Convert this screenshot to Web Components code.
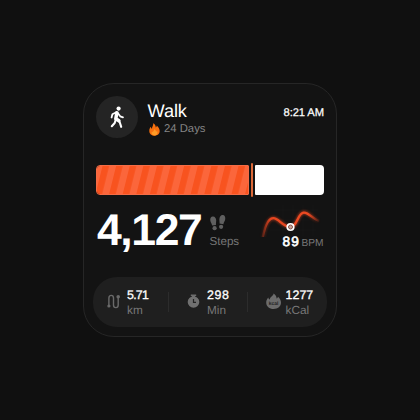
<!DOCTYPE html>
<html lang="en"><head><meta charset="utf-8"><title>Walk</title>
<style>
html,body{margin:0;width:420px;height:420px;background:#101010;overflow:hidden}
body{display:grid;place-items:center;font-family:"Liberation Sans",Arial,sans-serif;text-rendering:geometricPrecision}
</style></head><body>
<walk-card></walk-card>
<script>
const define=(name,html)=>{
  const t=document.createElement('template');t.innerHTML=html;
  customElements.define(name,class extends HTMLElement{
    constructor(){super();this.attachShadow({mode:'open'}).append(t.content.cloneNode(true))}
  });
};
define('card-header',`<style>
:host{display:flex;height:42px;color:#fff}
.disc{width:42px;height:42px;border-radius:50%;background:#242424;flex:none}
.info{margin-left:9.5px;flex:1}
.title{font-size:18.2px;line-height:20px;margin-top:5px;letter-spacing:-.1px}
.streak{display:flex;align-items:center;gap:4px;font-size:11.3px;line-height:14px;color:#858585;margin-top:1px}
.streak svg{margin-left:1.5px}
.time{font-size:11.2px;line-height:14px;margin-top:10px;letter-spacing:-.08px;-webkit-text-stroke:.25px #fff}
</style>
<div class="disc"><svg width="42" height="42" viewBox="0 0 42 42" fill="none" stroke="#fff" stroke-linecap="round" stroke-linejoin="round"><circle cx="22.6" cy="12.6" r="2.1" fill="#fff" stroke="none"/><path d="M20.9 16.8 19.8 22.8 22.9 24.8" stroke-width="3.5"/><path d="M20.3 16.3 16.4 18.2 15.6 21.5M22 17.3 24.2 20.3 27 21.3" stroke-width="1.8"/><path d="M19.8 23.5 18.7 27 15.8 30.2M22.2 23.8 23.8 26.5 25.2 30.8" stroke-width="2.1"/></svg></div>
<div class="info"><div class="title">Walk</div><div class="streak"><svg width="11" height="13" viewBox="0 0 11 13"><path d="M4.1.2C6 1.1 6.8 2.7 6.8 4.4 7.5 4.1 7.8 3.4 7.7 2.6 9.4 4 10.7 6 10.7 8 10.7 10.8 8.4 12.7 5.6 12.7 2.7 12.7.3 10.6.3 7.9.3 6 1 4.7 1.8 3.8 2 5 2.4 5.5 3 5.7 2.9 3.6 4.7 2.5 4.1.2Z" fill="#f8700f"/><path d="M5.4 6C6.8 7.1 7 8 7 8.8L8 7.9C9.3 10 8 12.4 5.6 12.4 3.3 12.4 2 10.6 3 8.5L4 9.2C3.9 8.1 5.4 7.5 5.4 6Z" fill="#ff9c26"/></svg><span>24 Days</span></div></div>
<div class="time">8:21 AM</div>`);
define('step-progress',`<style>
:host{display:flex;align-items:center;height:34px}
.done{width:153px;height:30px;border-radius:4px 1px 1px 4px;box-sizing:border-box;border:.8px solid #f56c45;overflow:hidden}
.done svg{display:block}
.mark{width:2.4px;height:34px;margin:0 1.9px 0 1.7px;border-radius:1px;background:#dc6837}
.left{flex:1;height:30px;border-radius:1px 4px 4px 1px;background:#fff}
</style><div class="done"><svg width="153" height="30"><defs><pattern id="s" width="13.6" height="30" patternUnits="userSpaceOnUse" patternTransform="translate(5.5 0) skewX(-14)"><path fill="#f8531f" d="M0 0h13.6v30H0z"/><path fill="#fb663b" d="M6.6 0h7v30h-7z"/></pattern></defs><rect width="153" height="30" fill="url(#s)"/></svg></div><div class="mark"></div><div class="left"></div>`);
define('step-summary',`<style>
:host{display:flex;height:50px;color:#fff}
.count{font-size:44.5px;line-height:50px;font-weight:700;letter-spacing:-1.4px;width:112.5px;margin-left:1px;padding-top:3px;box-sizing:border-box;white-space:nowrap}
.steps{width:47px;padding-top:12px;font-size:11.6px;color:#777}
.steps svg{display:block}.steps span{display:block;line-height:14px;margin-top:4px}
.heart{flex:1;display:flex;flex-direction:column;align-items:flex-end}
.heart svg{display:block}
.rate{display:flex;align-items:baseline;gap:1.5px;line-height:16px;margin-top:-3px}
b{font-weight:400;font-size:13.6px;letter-spacing:1.2px;-webkit-text-stroke:.65px #fff}small{font-size:10.2px;color:#777;margin-right:.5px}
</style>
<div class="count">4,127</div>
<div class="steps"><svg width="16" height="16" viewBox="0 0 16 16" fill="#606060"><path d="M.3 5.6C0 3.2.9 1.7 2.7 1.5 4.8 1.2 6 3.2 6.2 5.2 6.3 7 5.7 8.3 6 10L2.1 10.6C1.9 8.7.6 7.7.3 5.6ZM15.2 4.2C15.5 1.8 14.7.4 12.9.1 10.9-.2 9.6 1.8 9.4 3.9 9.2 5.7 9.8 7 9.5 8.6L13.4 9.3C13.6 7.4 14.9 6.3 15.2 4.2Z"/><ellipse cx="4.6" cy="13.2" rx="2.1" ry="2.1"/><ellipse cx="11.1" cy="11.8" rx="2.1" ry="2.1"/></svg><span>Steps</span></div>
<div class="heart"><svg width="66" height="34" viewBox="258 203 66 34"><defs><linearGradient id="g" gradientUnits="userSpaceOnUse" x1="261" y1="0" x2="320" y2="0"><stop stop-color="#e0401c" stop-opacity=".1"/><stop offset=".17" stop-color="#e5451f"/><stop offset=".8" stop-color="#ee4a22"/><stop offset="1" stop-color="#e0401c" stop-opacity=".05"/></linearGradient><filter id="b" x="-20%" y="-50%" width="140%" height="200%"><feGaussianBlur stdDeviation="1.3"/></filter><path id="w" d="M262 240C264.5 229 267 218.6 273.2 218.2 278.5 217.9 283 227 290.5 227 297.5 227 297.5 212.8 303.8 212.6 309 212.5 313 219 319 221"/></defs><path d="M274 210h44M274 220h46M270 230h46M283 205v31M293 205v31M303 205v31M313 205v31" stroke="#181818" stroke-width=".6"/><g fill="none" stroke="url(#g)"><use href="#w" stroke-width="4" opacity=".5" filter="url(#b)"/><use href="#w" stroke-width="2.3"/></g><circle cx="290.5" cy="227" r="4.1" fill="#fff"/><circle cx="290.5" cy="227" r="2" fill="#c9a298" stroke="#81534a"/></svg><div class="rate"><b>89</b><small>BPM</small></div></div>`);
define('stat-item',`<style>
:host{display:flex;height:50px;box-sizing:border-box}
.icon{width:20px;flex:none;padding-top:15px}
.text{padding-top:11px}
.v{color:#fff;font-size:12.4px;line-height:15px;-webkit-text-stroke:.3px #fff;letter-spacing:var(--ls,0)}
.u{color:#777;font-size:11.8px;line-height:14px}
</style><div class="icon"><slot name="icon"></slot></div><div class="text"><div class="v"><slot name="value"></slot></div><div class="u"><slot name="unit"></slot></div></div>`);
define('stats-pill',`<style>
:host{display:grid;grid-template-columns:75px 1px 79px 79px;height:50px;border-radius:24px;background:#1f1f1f}
i{width:1px;height:20px;margin-top:15px;background:#2c2c2c}
.mid{display:flex;justify-content:space-between}
svg{display:block}
</style>
<stat-item style="margin-left:14px;--ls:-.75px"><svg slot="icon" width="14" height="20" viewBox="0 0 14 20" fill="none" stroke="#6a6a6a" stroke-width="1.5" stroke-linecap="round"><path d="M1.9 13.5V6.1C1.9 2.5 6.5 2.5 6.5 6.1V13C6.5 16.5 11.2 16.5 11.2 13V5.5" stroke-width="1.4"/><circle cx="1.9" cy="14" r="1.6" fill="#6a6a6a" stroke="none"/><circle cx="11.2" cy="4.7" r="1.8" fill="#6a6a6a" stroke="none"/></svg><span slot="value">5.71</span><span slot="unit">km</span></stat-item><i></i>
<div class="mid"><stat-item style="margin-left:18px;--ls:.6px"><svg slot="icon" width="14" height="20" viewBox="0 0 14 20"><path d="M3.8 2.5h5.4v1.6H3.8zM5 4h3v2H5z" fill="#6c6c6c"/><circle cx="6.5" cy="10" r="5.8" fill="#707070"/><path d="M6.5 7v3.3H9" fill="none" stroke="#242424" stroke-width="1.2"/></svg><span slot="value">298</span><span slot="unit">Min</span></stat-item><i></i></div>
<stat-item style="margin-left:17.5px;--ls:.05px"><svg slot="icon" width="16" height="20" viewBox="0 0 16 20"><path d="M7.6 1.5C10 3.1 10.6 4.8 10.6 6.6 11.4 6.3 11.8 5.6 12 4.8 13.9 6.4 15 8.6 15 10.6 15 14.7 11.7 17 7.6 17 3.4 17 .2 14.4.2 10.5.2 8.4 1.1 6.8 2.4 5.4 2.5 6.6 3.1 7.2 3.8 7.4 4 4.7 7.2 4.1 7.6 1.5Z" fill="#6c6c6c"/><text x="7.6" y="13.2" text-anchor="middle" font-family="Liberation Sans,sans-serif" font-size="5" font-weight="700" fill="#222">kcal</text></svg><span slot="value">1277</span><span slot="unit">kCal</span></stat-item>`);
define('walk-card',`<style>
:host{display:block;width:254px;height:254px;box-sizing:border-box;border:1px solid #262626;border-radius:31px;background:#131313}
card-header{margin:12px 12px 0}
step-progress{margin:25px 12px 0}
step-summary{margin:6px 12px 0}
stats-pill{margin:24px 9px 0}
</style><card-header></card-header><step-progress></step-progress><step-summary></step-summary><stats-pill></stats-pill>`);
</script></body></html>
